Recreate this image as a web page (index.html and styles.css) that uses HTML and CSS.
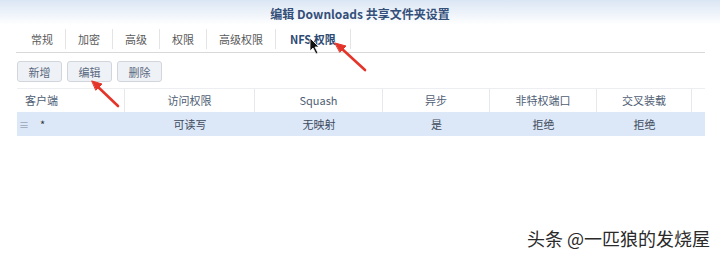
FILE: index.html
```html
<!DOCTYPE html>
<html lang="zh-CN">
<head>
    <meta charset="UTF-8">
    <title>编辑 Downloads 共享文件夹设置</title>
    <link rel="stylesheet" href="styles.css">
</head>
<body>
    <div class="window">
        <div class="titlebar">编辑 Downloads 共享文件夹设置</div>

        <div class="tabs">
            <div class="tab">常规</div>
            <div class="tab">加密</div>
            <div class="tab">高级</div>
            <div class="tab">权限</div>
            <div class="tab">高级权限</div>
            <div class="tab active">NFS 权限</div>
        </div>

        <div class="toolbar">
            <button class="btn">新增</button>
            <button class="btn">编辑</button>
            <button class="btn">删除</button>
        </div>

        <div class="grid">
            <div class="head left">客户端</div>
            <div class="head">访问权限</div>
            <div class="head">Squash</div>
            <div class="head">异步</div>
            <div class="head">非特权端口</div>
            <div class="head">交叉装载</div>
            <div class="head last"></div>

            <div class="cell left"><span class="grip">≡</span><span class="star">*</span></div>
            <div class="cell">可读写</div>
            <div class="cell">无映射</div>
            <div class="cell">是</div>
            <div class="cell">拒绝</div>
            <div class="cell">拒绝</div>
            <div class="cell"></div>
        </div>

        <div class="watermark">头条 @一匹狼的发烧屋</div>
    </div>

    <!-- annotations drawn over the screenshot -->
    <svg class="overlay" width="720" height="255" viewBox="0 0 720 255">
        <g stroke="#e5352a" stroke-width="2.6" stroke-linecap="round" fill="#e5352a">
            <line x1="365" y1="70" x2="341" y2="48"/>
            <polygon points="335,43 346,46 340,52" stroke-width="1"/>
            <line x1="118" y1="106" x2="97" y2="86"/>
            <polygon points="92,81 102,84 96,90" stroke-width="1"/>
        </g>
        <path d="M310 38 L310 51 L313 48 L316 54 L318 53 L315 47 L319 47 Z" fill="#111" stroke="#fff" stroke-width="0.8"/>
    </svg>
</body>
</html>
```

FILE: styles.css
```css
body {
    margin: 0;
    padding: 0;
    background: #fff;
    font-family: "Noto Sans CJK SC", "Noto Sans", sans-serif;
    color: #444;
}

.window {
    position: relative;
    width: 720px;
    height: 255px;
    overflow: hidden;
}

.titlebar {
    height: 25px;
    line-height: 27px;
    text-align: center;
    font-size: 12px;
    font-weight: 700;
    color: #34507a;
    background: linear-gradient(#dbe6f4, #fff);
}

.tabs {
    display: flex;
    align-items: center;
    height: 27px;
    margin: 0 15px 0 16px;
    border-bottom: 1px solid #d9d9d9;
}

.tab {
    padding: 0 12px;
    font-size: 11px;
    line-height: 20px;
    color: #5a5a5a;
    border-left: 1px solid #e4e4e4;
}

.tab:first-child {
    border-left: none;
    padding-left: 15px;
}

.tab.active {
    font-weight: 700;
    color: #2c4a73;
    padding: 0 14px;
    border-right: 1px solid #e4e4e4;
}

.toolbar {
    display: flex;
    gap: 5px;
    padding: 8px 17px 0;
}

.btn {
    width: 45px;
    height: 21px;
    padding: 0;
    font-family: inherit;
    font-size: 11px;
    color: #5a6880;
    background: #eef1f5;
    border: 1px solid #d2d6dc;
    border-radius: 3px;
}

.grid {
    display: grid;
    grid-template-columns: 108px 130px 128px 107px 107px 95px 13px;
    margin: 6px 0 0 17px;
    width: 688px;
    border-top: 1px solid #eceef2;
}

.head {
    height: 23px;
    line-height: 23px;
    text-align: center;
    font-size: 11px;
    color: #4f5e74;
    border-right: 1px solid #e6e8ec;
}

.head.last {
    border-right: none;
}

.head.left {
    text-align: left;
    padding-left: 8px;
}

.cell {
    height: 24px;
    line-height: 24px;
    text-align: center;
    font-size: 11px;
    color: #3e4a5c;
    background: #dce8f8;
}

.cell.left {
    text-align: left;
    padding-left: 2px;
}

.grip {
    color: #9aa6b6;
    font-size: 10px;
}

.star {
    margin-left: 11px;
    color: #333;
}

.watermark {
    position: absolute;
    right: 10px;
    bottom: 4px;
    font-size: 18px;
    color: #2a2a2a;
    text-shadow: 1px 1px 1px #fff, -1px -1px 1px #fff;
}

.overlay {
    position: absolute;
    top: 0;
    left: 0;
    pointer-events: none;
}
```
